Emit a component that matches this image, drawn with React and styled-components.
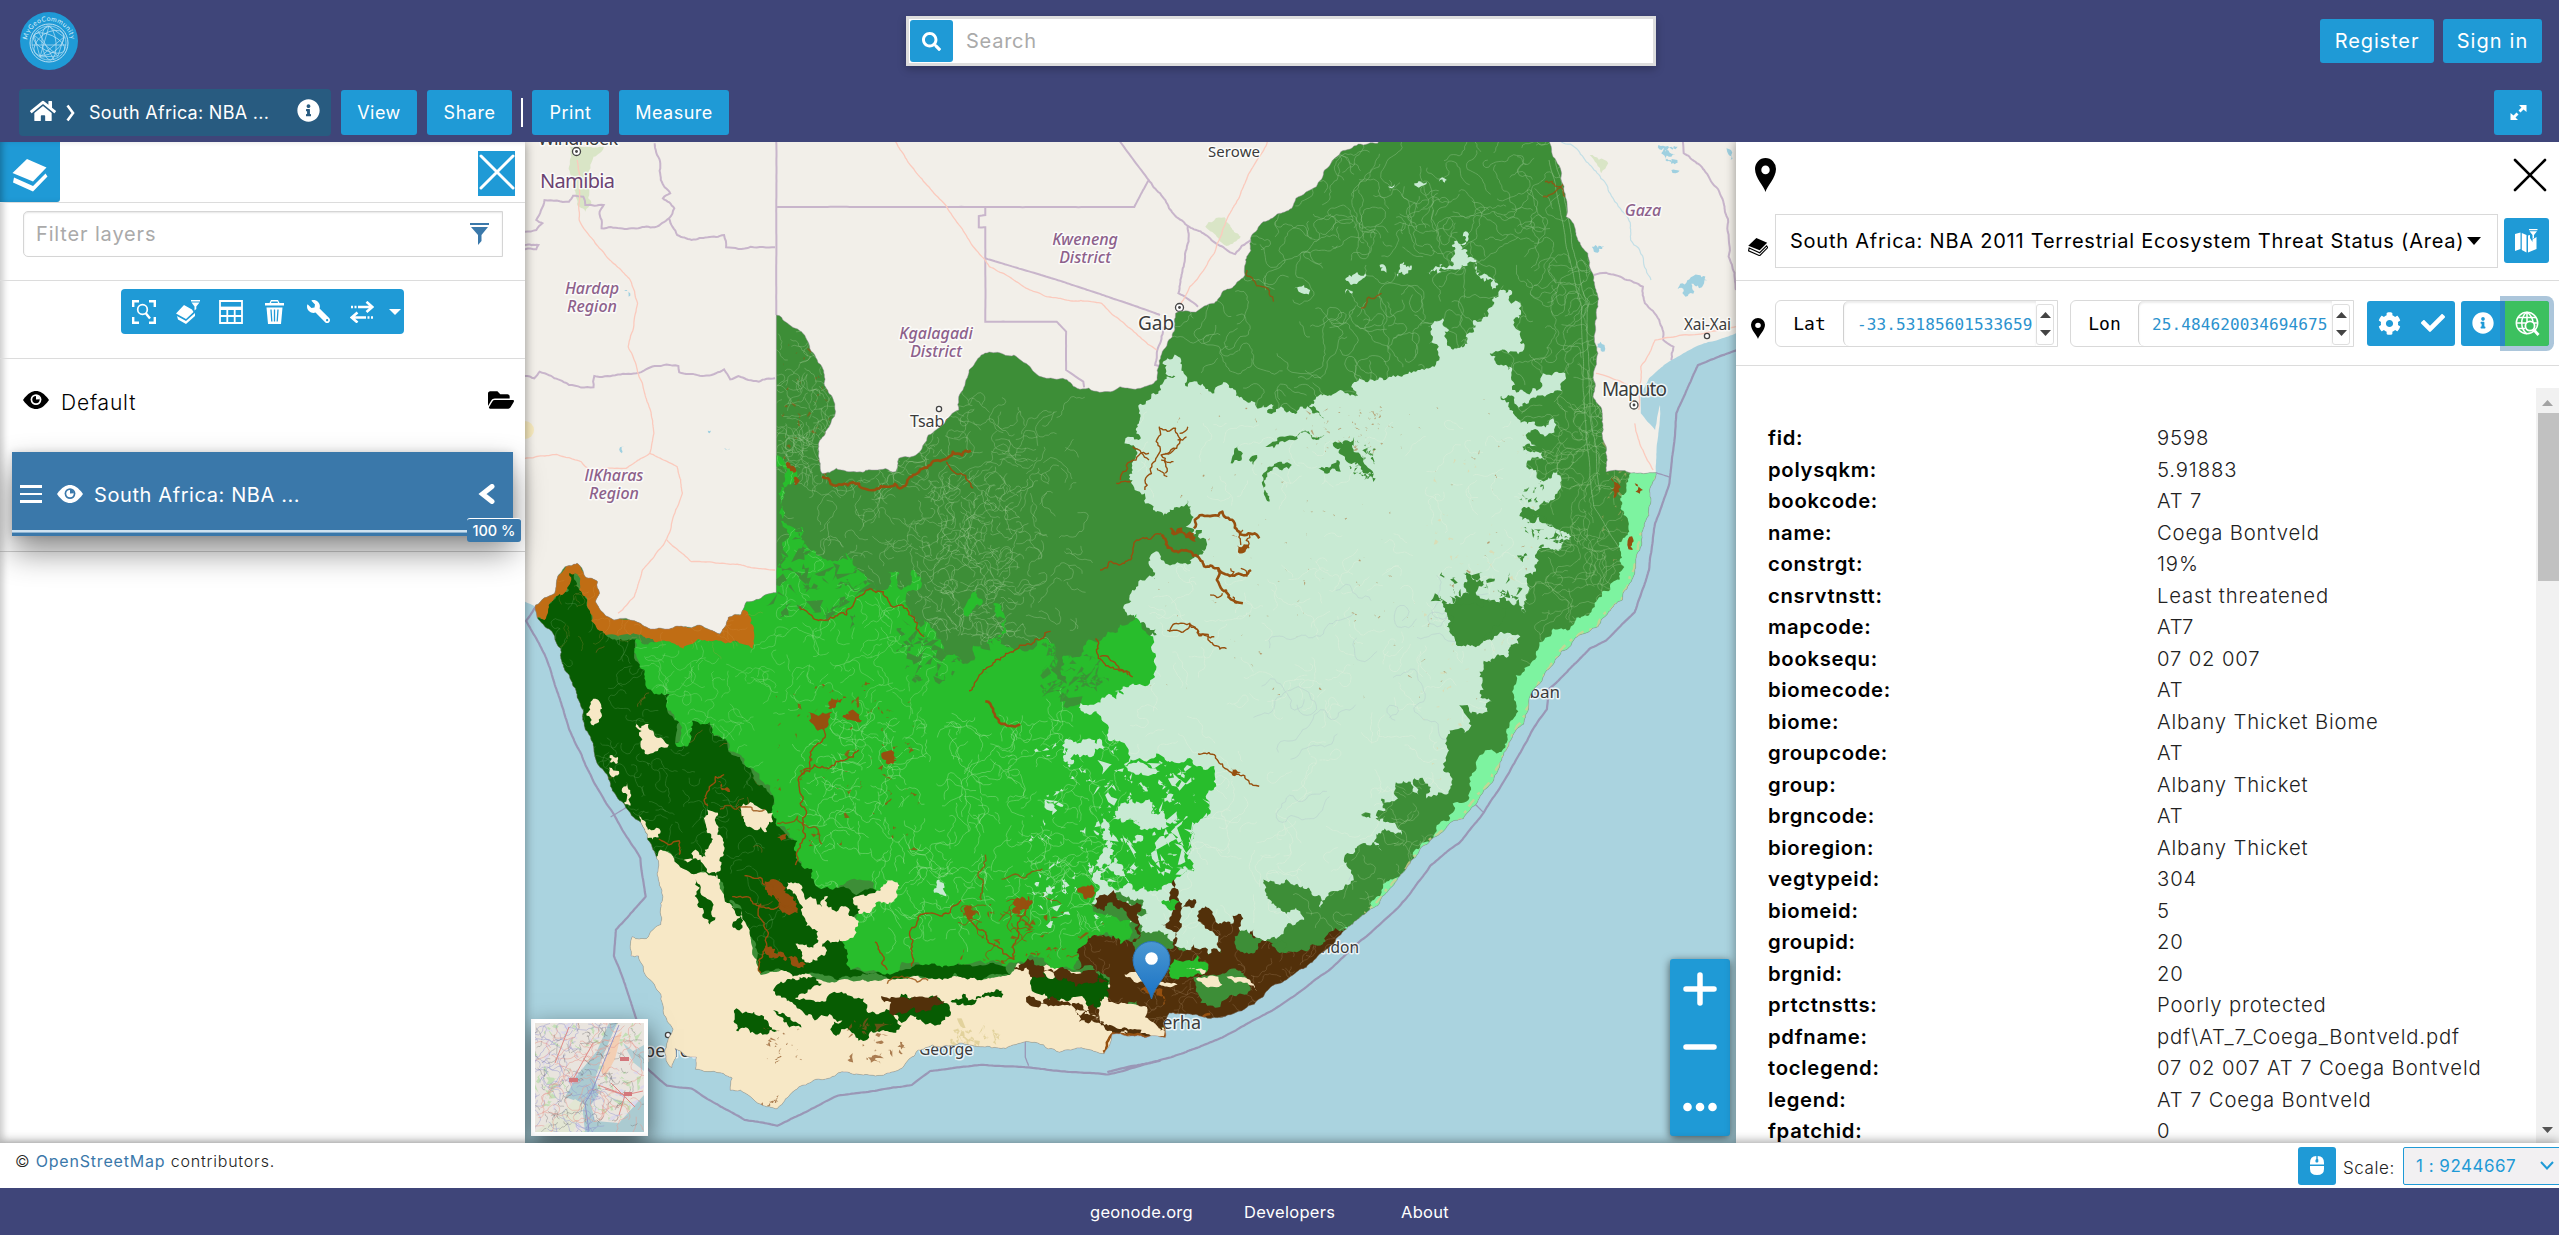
import React from "react";
import styled, { createGlobalStyle, css } from "styled-components";
import { FaSearch, FaHome, FaInfoCircle, FaWrench, FaCog, FaCheck, FaFolderOpen } from "react-icons/fa";

/* ---------- theme ---------- */
const navy = "#3f4579";
const blue = "#1f9ad6";
const steel = "#3a78aa";
const line = "#dcdcdc";

const GlobalStyle = createGlobalStyle`
  * { box-sizing: border-box; }
  body { margin: 0; overflow: hidden; background: #fff; }
  body, button, input { font-family: Inter, "Open Sans", sans-serif; }
  svg { display: block; flex: none; }
`;

/* ---------- map geometry ---------- */
const FRAMES = {
  A: [520, 140, 2.45, 3],
  B: [1100, 140, 2.45, 3],
  C: [520, 600, 2.45, 2.866],
  D: [1100, 600, 2.45, 2.469],
};
const pts = (s) => {
  let f = FRAMES.A;
  return s.trim().split(/\s+/).map((t) => {
    if (FRAMES[t[0]]) { f = FRAMES[t[0]]; t = t.slice(1); }
    const [x, y] = t.split(",").map(Number);
    return [f[0] + x / f[2], f[1] + y / f[3]];
  });
};
const rng = (seed) => () => {
  seed = (seed + 0x6d2b79f5) | 0;
  let t = Math.imul(seed ^ (seed >>> 15), 1 | seed);
  t = (t + Math.imul(t ^ (t >>> 7), 61 | t)) ^ t;
  return ((t ^ (t >>> 14)) >>> 0) / 4294967296;
};
const split = (a, b, amp, r, out) => {
  const dx = b[0] - a[0], dy = b[1] - a[1];
  const len = Math.hypot(dx, dy);
  if (len < 3.2) { out.push(b); return; }
  const k = ((r() - 0.5) * 2 * amp * Math.min(len, 34)) / len;
  const m = [(a[0] + b[0]) / 2 - dy * k, (a[1] + b[1]) / 2 + dx * k];
  split(a, m, amp, r, out);
  split(m, b, amp, r, out);
};
const rough = (s, amp = 0.25, closed = true, seed = 7, straightClose = false) => {
  const p = pts(s), r = rng(seed), out = [p[0]];
  for (let i = 1; i < p.length; i++) split(p[i - 1], p[i], amp, r, out);
  if (closed && !straightClose) split(p[p.length - 1], p[0], amp, r, out);
  return "M" + out.map((q) => q[0].toFixed(1) + " " + q[1].toFixed(1)).join("L") + (closed ? "Z" : "");
};

const COUNTRY = rough(`A628,525 650,545 690,575 710,625 740,680 745,730 765,770 770,830 735,900 732,940 740,1000 775,985 810,995 870,990 920,995 928,955 970,945 1000,885 1040,850 1075,810 1085,750 1100,690 1130,645 1170,637 1210,645 1250,680 1290,715 1330,715 1365,745 1420,757 1470,740 1520,745
 B140,720 165,610 185,520 280,490 300,455 355,405 357,370 370,290 400,245 470,205 480,175 530,140 550,90 590,35 680,10 690,-10 1098,-10 1110,50 1140,170 1142,230 1165,270 1195,340 1210,410 1220,500 1220,640 1208,770 1230,810 1240,995 1362,998 1350,1080 1330,1170 1310,1290 1280,1380 1220,1460
 D1170,90 1100,170 1050,265 1010,340 985,390 940,470 890,540 830,580 760,650 700,725 650,775 600,815 560,860 520,895 460,935 400,980 300,1030 170,1020 155,1045 160,1080 110,1080 30,1072 10,1120
 C1350,1290 1240,1265 1190,1285 1100,1275 1010,1275 950,1320 930,1345 850,1360 780,1355 760,1370 700,1390 650,1430 630,1458 590,1445 540,1405 515,1405 520,1370 490,1355 430,1345 432,1310 380,1285 372,1340 358,1320 360,1270 375,1230 345,1130 310,1080 290,1020 272,1020 275,965 310,970 345,930 350,850 340,760 325,715 270,610 220,520 180,420 140,280 100,140 60,75 38,30
 A38,1395 85,1360 90,1320 110,1280 140,1270 160,1310 190,1325 195,1360 185,1385 205,1420 230,1440 260,1435 300,1455 320,1467 400,1460 440,1455 490,1482 505,1455 510,1432 540,1425 555,1385 600,1365 628,1358`, 0.12, true, 7, true);

const LAND = rough(`A-60,-60 B1700,-60 1700,555 1558,580 1480,610 1400,660 1345,715 1325,760 1325,820 1360,870 1372,795 1366,900 1362,998 A400,1500 100,1460 38,1400 12,1385 -60,1370`, 0.03);

const GRASS = rough(`B165,655 205,700 215,740 280,760 320,745 430,790 410,818 490,800 540,755 600,760 625,775 635,715 700,720 740,710 820,680 830,620 805,610 840,535 850,610 900,600 915,540 950,530 965,470 1000,465 1030,490 1030,590 1040,620 1000,640 960,640 1010,690 1010,750 1080,745 1140,700 1090,770 1050,790 1000,765 975,770 1000,800 1110,835 1100,880 1060,870 1070,920 1035,920 1090,960 1045,970 1080,1020 1125,990 1130,1040 1110,1080 1040,1090 1035,1140 1110,1160 1150,1200 1110,1230 1070,1240 1040,1310 1040,1420 990,1370 960,1400 890,1300 905,1360 840,1400 850,1460
 D870,100 930,105 1030,90 1000,140 940,150 930,230 960,250 880,260 910,310 870,320 850,360 840,420 850,480 800,490 770,440 780,480 725,450 730,490 690,490 700,520 640,530 710,550 740,580 670,600 690,620 600,630 620,680 560,730 540,760 510,710 400,690 420,750 480,760 500,790 440,830 370,830 330,860 200,860 150,820 100,820 90,760 40,740
 C1540,900 1440,850 1400,870 1400,700 1300,600 1290,420 1340,300 1520,220 1560,100 A1520,1450 1500,1350 1560,1320 1550,1240
 B150,1260 240,1250 250,1170 210,1160 215,1080 180,1110 130,1110 110,1060 85,1050 80,990 60,910 95,900 95,820 120,780 150,750`, 0.38);

const KAROO = rough(`A620,950 650,970 680,1010 640,1040 640,1080 635,1120 690,1160 690,1200 720,1230 760,1260 800,1240 850,1320 870,1350 895,1350 900,1295 930,1300 935,1350 960,1290 985,1330 950,1400
 C960,50 1040,150 1100,180 1110,130 1170,100 1200,135 1290,110 1300,200 1340,240 1330,160 1400,115 1480,115 1470,70 1510,40 D85,40 130,90 135,190 90,210 40,245 0,230
 C1480,270 1400,300 1370,290 1380,320 1430,350 1440,400 1490,440 1480,470 1568,490 D60,410 220,390 280,410 285,460 260,490 265,530 225,570 215,640 230,670 180,700 140,720 80,700 40,650 0,690
 C1560,830 1500,830 1440,760 1400,800 1420,820 1400,870 1500,920 1500,950 1420,960 1370,1010 1360,1060 1290,1040 1210,1040 1190,1050 1090,1045 980,1045 900,1070 810,1060 790,980 825,900 880,850 930,815 870,830 780,825 725,820 715,770 680,745 680,690 635,650 620,560 560,480 510,430 505,400 475,390 465,350 420,345 410,420 380,410 390,350 360,310 370,260 310,250 305,200 280,150 285,110 400,110 500,110 570,140 530,70 540,20 A560,1340 620,1340`, 0.28);

const SUCCULENT = rough(`A60,1440 70,1395 120,1350 118,1295 135,1295 145,1350 C165,0 175,60 210,100 285,110 280,150 305,200 310,250 370,260 360,310 390,350 380,410 410,420 420,345 465,350 475,390 505,400 510,430 560,480 620,560 635,650 680,690 680,745 715,770 725,820 780,825 870,830 900,810 880,850 825,900 790,980 810,1060 900,1070 980,1045 1090,1045 1190,1050 1200,1075 1130,1090 1000,1085 900,1085 780,1090 700,1070 640,1060 590,1070 580,1030 560,940 500,850 490,800 455,780 410,775 375,735 345,715 325,760 200,600 0,400 0,0`, 0.2);

const FYNBOS = rough(`C300,700 345,715 375,735 410,775 455,780 490,800 500,850 560,940 580,1030 590,1075 640,1060 700,1070 780,1090 900,1085 1000,1085 1130,1090 1200,1075 1220,1040 1290,1045 1340,1060 1400,1080 1540,1100 D60,995 115,1005 110,1030 150,1055 200,1090 0,1200 C600,1560 200,1400 200,900`, 0.15);

const THICKET = rough(`C1370,1020 1380,990 1430,960 1500,980 1515,930 1490,910 1400,880 1410,855 1490,870 1520,930 D100,870 150,890 180,860 185,820 150,800 175,780 180,690 200,760 235,740 200,780 185,830 200,865 230,850 310,870 290,830 250,800 250,760 290,800 320,800 345,775 345,820 440,870 520,850 600,810 640,880 300,1060 170,1020 170,1090 120,1060 60,1030 115,1010 90,990 0,980
 C1568,1270 1520,1240 1400,1200 1360,1180 1530,1165 1440,1145 1445,1090 1360,1060`, 0.34);

const DESERT = rough(`A30,1430 20,1390 85,1350 90,1310 110,1270 140,1260 165,1300 200,1315 205,1370 205,1410 300,1440 320,1457 440,1445 490,1470 510,1425 545,1410 C570,140 480,115 400,140 330,120 270,100 210,100 175,60 165,0 A145,1350 135,1300 120,1300 115,1350 70,1395 60,1440`, 0.2);

const COAST = rough(`B1300,1000 1380,990 1400,1300 1200,1520 D1000,520 850,640 600,840 600,808 690,722 785,605 855,545 905,488 922,410 995,325 1015,240 1060,150 1110,70 B1150,1470 1200,1420 1250,1350 1280,1200 1290,1050`, 0.28);

const patches = (list, amp = 0.35) => list.map((s, i) => rough(s, amp, true, 11 + i)).join("");

const GREEN_ISLES = patches([
  "B405,920 440,890 490,880 550,885 530,900 440,905",
  "B470,975 430,980 410,1010 415,1085 400,1040 410,990 440,965",
  "B570,910 620,910 640,950 670,1000 640,980 600,950",
  "B320,970 340,915 335,960", "B365,960 385,945 375,975", "B535,985 565,980 580,960 590,995 550,1000",
  "B500,780 530,810 550,835 520,820", "B955,640 1010,650 1000,690 970,670",
  "D1000,20 880,100 850,30 840,0 960,0", "B1040,1100 1090,1130 1110,1160 1060,1150",
]);
const MINT_ISLES = patches([
  "B475,445 500,435 515,450 500,462", "B600,455 620,455 600,465", "B610,405 625,420 650,400 640,420 615,435",
  "B730,410 745,365 755,400 740,395", "B685,375 700,380 702,398", "B800,400 850,385 865,350 862,315 878,310 900,275 885,330 920,370 970,445 930,410 900,370 850,388",
  "B980,450 1010,455 1000,480 960,500", "B770,130 800,125 795,135", "B830,125 850,120 845,128", "B705,140 722,132 715,145",
  "C1335,400 1370,410 1400,400 1430,430 1400,450 1370,450 1345,480 1330,450",
  "C1470,590 1500,570 1520,590 1550,580 1560,640 1520,650 1490,630 1460,625", "C1425,640 1445,650 1430,690",
  "C1430,710 1460,700 1440,760 1400,790 1410,760", "C1290,570 1310,590 1290,600", "C1270,850 1310,820 1290,860", "C1020,810 1045,850 1025,840",
  "D150,490 180,480 170,500", "D120,550 170,540 150,560", "D60,590 100,580 80,600",
  "D170,830 195,820 200,850 300,850 310,865 240,860",
], 0.5);
const CREAM_ISLES = patches([
  "C458,600 485,610 497,690 492,770 485,800 470,780 400,745 430,715 455,735",
  "C540,595 580,590 600,600 620,635 605,665 590,650 570,655",
  "C285,355 300,375 315,355 330,390 365,415 340,425 320,440 300,400",
  "C285,610 310,650 340,680 310,680", "C190,285 197,320 180,360 172,350", "C220,445 240,450 235,470 220,465", "C218,480 242,490 240,502 220,500",
  "C262,520 270,590 255,580 250,540",
  "C655,810 700,860 740,880 755,850 770,890 820,910 820,960 770,980 740,985 730,950 700,920 685,870",
  "C675,985 740,980 745,1020 710,1040", "C815,855 870,840 890,815 925,810 925,845 870,870 830,900",
  "C1420,1165 1568,1160 1540,1190",
  "D200,905 250,920 200,915", "D300,930 370,945 380,965 320,945",
]);
const DARK_ISLES = patches([
  "C670,1140 750,1150 830,1140 850,1180 920,1200 935,1220 900,1235 760,1230 790,1205 700,1190",
  "C910,1160 1030,1145 1055,1190 1010,1215 970,1200 975,1185 915,1185",
  "C1250,1070 1330,1080 1440,1105 1440,1140 1350,1145 1260,1125",
  "C530,1170 545,1185 580,1190 610,1220 630,1235 590,1240 530,1235", "C620,1120 650,1095 680,1090 740,1100 650,1140",
  "C1055,1150 1180,1120 1180,1140 1070,1160", "C620,1175 650,1190 690,1225 660,1225",
  "C430,800 450,850 465,930 450,890", "C500,850 520,870 545,940 520,930", "D0,920 25,940 20,975 0,970",
]);
const GREEN_SOUTH = patches(["D230,930 310,920 370,940 310,985 240,970", "D330,830 400,840 380,870 340,865", "D420,850 450,845 450,870"]);
const KAROO_ISLES = patches(["D0,780 60,790 80,820 50,850 0,830", "D165,910 260,895 265,905 210,930", "D150,745 195,745 185,765", "A1090,1400 1120,1350 1115,1400 1095,1430", "A1160,1390 1180,1400 1170,1500"]);
const THICKET_SOUTH = patches(["C885,1135 1000,1140 1040,1150 940,1185 905,1185", "C1210,1055 1350,1070 1440,1095 1340,1085 1260,1080", "C1240,1145 1330,1160 1440,1200 1360,1180", "C1390,1190 1450,1215 1490,1245 1450,1235"]);
const CREAM_SOUTH = patches(["D0,990 60,995 115,1005 110,1030 150,1060 140,1075 60,1055 0,1040", "D60,925 130,935 190,950 120,945", "D235,935 290,930 300,950 260,955", "D210,910 260,915 250,925", "D310,930 370,945 385,965 330,945"], 0.2);
const RUST_BLOBS = patches([
  "C705,320 735,330 765,320 755,350 725,370 708,345", "C755,310 800,280 770,310", "C790,335 820,318 838,345 815,345", "C885,440 910,430 915,470",
  "C620,800 650,840 680,885 665,900 640,870 600,830", "C600,990 650,1020 700,1045 650,1035", "C480,515 515,550 495,545", "C630,680 655,670 640,690",
  "C1090,880 1115,890 1110,915 1090,900", "C1230,850 1255,860 1225,900 1205,890", "C1365,830 1400,815 1410,840 1380,850", "A655,965 675,985 670,1005", "A670,1015 685,1020 672,1035",
  "B170,1165 230,1180 235,1205 210,1195", "B335,1215 365,1215 350,1240", "B1310,1030 1330,1050 1312,1055", "B1297,1190 1305,1230 1292,1215",
  "D320,415 345,425 330,435", "D100,965 160,985 155,1000", "B1255,1010 1268,1030 1258,1075 1252,1050",
], 0.4);
const RIVERS = [
  "A740,1010 840,1045 900,1040 960,1010 1035,960 1060,935 1105,932", "A1045,965 1080,1000 1110,1045", "A685,1400 740,1440 800,1425 830,1370 890,1355 920,1400 990,1490",
  "B150,1185 200,1230 240,1250 290,1285 370,1290", "B290,1285 300,1350 350,1390", "B230,1165 250,1125 300,1115 330,1150 390,1195",
  "B0,1290 60,1270 90,1200 150,1180", "B145,860 140,950 110,1050", "B145,865 185,865 195,910 150,945 160,1000", "B40,1030 75,1025", "B50,1020 75,965 120,940",
  "B170,1475 220,1450 280,1490", "C740,360 710,450 690,560 680,720 675,760", "C690,500 760,480 830,430", "C550,790 620,820 680,895", "C590,870 600,1000 590,1070",
  "C520,850 590,880 680,885", "C1090,880 1120,940 1210,1030 1225,920 1245,850", "C960,1050 955,950 1080,860", "C870,980 900,1060", "C1140,290 1170,340 1225,355", "C1100,260 1135,200 1200,150 1300,90",
  "C1410,110 1430,180 1490,215", "D0,140 40,160 80,190", "D165,75 220,60 265,85 310,120", "D240,380 300,405 340,430 390,460", "C460,590 470,530 500,500", "C340,685 390,690 390,730", "C490,600 600,600",
  "C630,640 680,620 740,700", "C1140,730 1130,860", "C1180,800 1280,770", "C900,1100 1000,1090", "B360,390 400,440 425,485", "B640,505 690,460", "B1090,125 1140,170", "B1150,130 1085,170",
].map((s, i) => rough(s, 0.25, false, 40 + i));
const TWIGS = ["B195,880 215,860", "B190,900 212,890", "B160,940 185,925", "B150,960 180,965", "B140,985 165,1010", "B80,920 120,960", "B320,1285 325,1310", "B345,1285 360,1310", "B350,1170 345,1215", "B370,1180 365,1225", "B300,1360 270,1365", "B325,1370 335,1390"].map((s, i) => rough(s, 0.3, false, 80 + i)).join("");

const walks = (seed, n, [x0, y0, x1, y1], steps, step) => {
  const r = rng(seed);
  let d = "";
  for (let i = 0; i < n; i++) {
    let x = x0 + r() * (x1 - x0), y = y0 + r() * (y1 - y0), a = r() * 6.28;
    d += `M${x.toFixed(1)} ${y.toFixed(1)}`;
    const k = 4 + Math.floor(r() * steps);
    for (let j = 0; j < k; j++) {
      a += (r() - 0.5) * 1.9;
      x += Math.cos(a) * step; y += Math.sin(a) * step;
      d += `L${x.toFixed(1)} ${y.toFixed(1)}`;
    }
  }
  return d;
};
const specks = (seed, n, box, size) => {
  const r = rng(seed);
  let d = "";
  for (let i = 0; i < n; i++) {
    const x = box[0] + r() * (box[2] - box[0]), y = box[1] + r() * (box[3] - box[1]);
    d += `M${x.toFixed(1)} ${y.toFixed(1)}`;
    const s = size * (0.4 + r());
    for (let j = 0; j < 6; j++) d += `l${((r() - 0.45) * s).toFixed(1)} ${((r() - 0.5) * s).toFixed(1)}`;
    d += "Z";
  }
  return d;
};

const BORDERS = [
  "A628,0 628,525", "A12,275 40,270 55,250 40,240 60,180 120,185 130,167 155,170 160,195 205,195 195,215 200,265 290,265 330,262 365,235 378,205 350,175 368,160 345,120 330,10",
  "A365,235 385,285 420,300 500,285 505,322 625,322", "A12,315 45,315 40,328 12,328", "A12,708 35,715 48,695 120,735 180,742 182,708 285,700 330,678 388,678 390,697 480,700 500,688 515,718 535,708 585,725 625,715",
  "A630,201 1505,201 1540,120 1470,5", "A1540,120 1590,205 1636,258 1752,342 1790,300", "A1140,201 1140,225 1124,228 1124,262 1140,262 1140,545 1315,545 1338,575 1338,690 1380,725 1382,742",
  "A1140,355 1330,425 1500,495 1568,525", "B215,258 205,380 192,460 240,500", "B155,560 135,675 150,680", "B1428,5 1430,40 1480,90 1530,200 1540,350 1558,450", "B1210,405 1240,398 1330,440 1335,490 1370,540 1380,600 1405,620 1400,660",
].map((s, i) => rough(s, [0, 5, 7, 8].includes(i) ? 0.005 : 0.08, false, 3 + i));
const ROADS = [
  "A140,60 145,240 220,360 270,420 288,490 265,620 300,730 328,880 318,940 385,980 398,1060 360,1195 300,1290 280,1370 240,1420", "A12,955 90,943 150,965 170,990 260,985 318,940", "A360,1200 420,1265 500,1270 625,1290",
  "A920,5 960,80 1090,280 1150,380 1290,470 1425,490 1480,550 1560,630", "B410,5 365,100 310,240 280,340 220,440 195,500", "B1320,810 1325,680 1360,600 1480,580 1558,560", "B1215,700 1300,740", "B1310,850 1330,930 1355,990",
].map((s, i) => rough(s, 0.05, false, 23 + i));
const MARITIME = rough(`A40,1400 C35,25 15,60 60,155 120,370 180,520 295,740 308,850 235,945 230,1020 265,1130 290,1220 310,1340 360,1392 420,1400 550,1490 630,1507 780,1420 960,1390 1005,1350 1130,1332 1440,1360 1568,1320 D20,1165 170,1130 300,1080 420,1015 560,915 640,840 730,760 810,655 880,600 940,525 1000,430 1060,320 1095,270 1100,220 1200,120 1240,100 1310,30 B1320,1380 1345,1290 1360,1150 1395,1030 1412,820 1465,675 1570,625`, 0.02, false);
const LAKES = patches(["B1368,15 1415,20 1410,28 1370,28", "B1375,40 1410,42 1400,50", "B1385,60 1415,68 1400,72", "B1400,90 1420,92 1410,100", "B1415,448 1480,430 1440,468", "B1205,320 1235,318 1210,335", "B1226,605 1236,615 1230,635", "A255,450 270,460 266,470", "A245,935 256,920 250,940", "A500,925 515,925 508,930", "B1535,25 1546,30 1545,60", "A460,872 468,872 465,880"], 0.5);

const Place = styled.text`
  font-family: "Noto Sans", sans-serif;
  font-size: ${(p) => p.$size || 17}px;
  fill: ${(p) => (p.$region ? "#8d618b" : p.$country ? "#6b4372" : "#3b3b3b")};
  font-style: ${(p) => (p.$region ? "italic" : "normal")};
  font-weight: ${(p) => (p.$region ? 500 : 400)};
  paint-order: stroke;
  stroke: rgba(255, 255, 255, 0.75);
  stroke-width: 3px;
  stroke-linejoin: round;
`;
const Town = ({ x, y, capital }) => (
  <g fill="none" stroke="#444" strokeWidth="1.3">
    <circle cx={x} cy={y} r={capital ? 4 : 2.6} fill="#fff" />
    {capital && <circle cx={x} cy={y} r="1.4" fill="#444" stroke="none" />}
  </g>
);

const BioMap = () => (
  <svg width="1211" height="1001" viewBox="525 142 1211 1001">
    <defs>
      <clipPath id="country"><path d={COUNTRY} /></clipPath>
      <clipPath id="grass"><path d={GRASS} /></clipPath>
      <clipPath id="karoo"><path d={KAROO} /></clipPath>
      <clipPath id="succulent"><path d={SUCCULENT} /></clipPath>
      <clipPath id="thicket"><path d={THICKET} /></clipPath>
      <linearGradient id="pin" x1="0" y1="0" x2="0" y2="1"><stop offset="0" stopColor="#4a97d2" /><stop offset="1" stopColor="#1a72c4" /></linearGradient>
    </defs>
    <rect x="525" y="142" width="1211" height="1001" fill="#aad3df" />
    <path d={LAND} fill="#f2efe9" />
    <path d={patches(["A122,20 205,20 180,50 170,120 175,190 160,215 140,180 120,80", "B258,260 305,232 345,290 310,318 290,295", "B1200,45 1245,70 1228,100"], 0.2)} fill="#d5e3c0" opacity="0.85" />
    <ellipse cx="525" cy="430" rx="9" ry="9" fill="#f6e9bd" />
    <path d={LAKES} fill="#9fd0e0" />
    <path d={rough("B1130,5 1200,75 1250,160 1285,220 1300,300 1350,420", 0.12, false)} fill="none" stroke="#c3dfe6" strokeWidth="1.2" />
    <g fill="none" stroke="#c8b5cb" strokeWidth="2">{BORDERS.map((d, i) => <path key={i} d={d} />)}</g>
    <g fill="none" stroke="#fbcabd" strokeWidth="1.3">{ROADS.map((d, i) => <path key={i} d={d} />)}</g>
    <path d={MARITIME} fill="none" stroke="#9a97b6" strokeWidth="2.2" strokeLinejoin="round" />
    <path d={rough("D915,500 940,525", 0, false) + rough("C222,622 260,595", 0, false) + rough("C1238,1260 1238,1310 1246,1335", 0, false) + rough("B1362,998 1398,1012", 0, false)} fill="none" stroke="#9a97b6" strokeWidth="1.3" />
    <Town x={576.5} y={151.5} capital /><Town x={939} y={409} /><Town x={1179.5} y={307.5} capital /><Town x={1707} y={336} /><Town x={1634} y={405} capital /><Town x={668} y={1035} />
    <Place x="538" y="144.5" $size={18} textLength="80">Windhoek</Place>
    <Place x="540" y="188" $size={20} $country textLength="75">Namibia</Place>
    <Place x="592" y="294" $size={16} $region textAnchor="middle">Hardap</Place>
    <Place x="592" y="312" $size={16} $region textAnchor="middle">Region</Place>
    <Place x="614" y="481" $size={16} $region textAnchor="middle">llKharas</Place>
    <Place x="614" y="499" $size={16} $region textAnchor="middle">Region</Place>
    <Place x="936" y="339" $size={16} $region textAnchor="middle">Kgalagadi</Place>
    <Place x="936" y="357" $size={16} $region textAnchor="middle">District</Place>
    <Place x="1085" y="245" $size={16} $region textAnchor="middle">Kweneng</Place>
    <Place x="1085" y="263" $size={16} $region textAnchor="middle">District</Place>
    <Place x="1643" y="216" $size={16} $region textAnchor="middle">Gaza</Place>
    <Place x="910" y="427" $size={16}>Tsabong</Place>
    <Place x="1208" y="156.5" $size={15} textLength="52">Serowe</Place>
    <Place x="1138" y="330" $size={19}>Gaborone</Place>
    <Place x="1602" y="396" $size={19} textLength="65">Maputo</Place>
    <Place x="1684" y="330" $size={15.5} textLength="47">Xai-Xai</Place>
    <Place x="1560" y="698" $size={17} textAnchor="end">Durban</Place>
    <Place x="1359" y="953" $size={15.5} textAnchor="end">East London</Place>
    <Place x="1201" y="1029" $size={18} textAnchor="end">Gqeberha</Place>
    <Place x="919" y="1055" $size={15.5}>George</Place>
    <Place x="622" y="1057" $size={18} textLength="94">Cape Town</Place>

    <g clipPath="url(#country)">
      <rect x="520" y="130" width="1220" height="1020" fill="#3d8e37" />
      <path d={walks(1, 260, [780, 400, 1080, 640], 16, 3)} fill="none" stroke="#a9cf9c" strokeWidth="0.8" opacity="0.42" />
      <path d={walks(31, 150, [920, 480, 1020, 640], 10, 2.5)} fill="none" stroke="#a9cf9c" strokeWidth="0.8" opacity="0.45" />
      <path d={walks(21, 70, [776, 330, 840, 480], 12, 3)} fill="none" stroke="#a9cf9c" strokeWidth="0.8" opacity="0.4" />
      <path d={walks(2, 230, [1180, 145, 1640, 430], 34, 3)} fill="none" stroke="#8fc187" strokeWidth="0.9" opacity="0.5" />
      <path d={walks(3, 150, [1540, 380, 1640, 740], 24, 3)} fill="none" stroke="#9cc98f" strokeWidth="0.8" opacity="0.45" />
      <path d={walks(13, 120, [1300, 740, 1500, 940], 14, 3)} fill="none" stroke="#9cc98f" strokeWidth="0.8" opacity="0.45" />
      <path d={specks(4, 50, [780, 340, 840, 480], 4)} fill="#96500f" opacity="0.6" />
      <path d={specks(14, 40, [1600, 440, 1640, 560], 5)} fill="#c8b070" opacity="0.5" />
      <path d={rough("B1100,60 1140,300 1180,500 1190,850 1210,1100 1270,1220", 0.03, false) + rough("B1115,60 1155,300 1195,500 1200,800 1225,1050", 0.04, false)} fill="none" stroke="#8fc187" strokeWidth="1" opacity="0.6" />
      <path d={FYNBOS} fill="#f7e8c6" />
      <path d={GRASS} fill="#c8ead3" />
      <g clipPath="url(#grass)">
        <path d={walks(5, 300, [1130, 400, 1560, 950], 14, 3)} fill="none" stroke="#dceedb" strokeWidth="0.8" opacity="0.7" />
        <path d={walks(6, 14, [1250, 600, 1480, 850], 40, 4)} fill="none" stroke="#b9cfcf" strokeWidth="0.9" opacity="0.6" />
        <path d={specks(7, 150, [1140, 390, 1530, 700], 2.5)} fill="#a8662c" opacity="0.6" />
        <path d={specks(8, 120, [1420, 450, 1540, 860], 3.5)} fill="#e4d6a8" opacity="0.65" />
        <path d={specks(9, 50, [1300, 410, 1380, 450], 3)} fill="#a8662c" opacity="0.55" />
        <path d={specks(33, 60, [1520, 480, 1570, 560], 7) + specks(34, 30, [1440, 570, 1520, 610], 8) + specks(35, 22, [1350, 440, 1375, 475], 7)} fill="#3d8e37" />
      </g>
      <path d={SUCCULENT} fill="#075c02" />
      <g clipPath="url(#succulent)">
        <path d={walks(10, 240, [550, 600, 780, 1050], 16, 2.8)} fill="none" stroke="#5f9a58" strokeWidth="0.7" opacity="0.5" />
        <path d={walks(36, 40, [560, 640, 760, 1040], 6, 2.8)} fill="none" stroke="#a8662c" strokeWidth="0.8" opacity="0.6" />
      </g>
      <path d={KAROO} fill="#28bd2c" />
      <g clipPath="url(#karoo)">
        <path d={walks(11, 330, [800, 720, 1130, 930], 14, 2.8)} fill="none" stroke="#a6e5a0" strokeWidth="0.8" opacity="0.5" />
        <path d={walks(12, 150, [776, 480, 960, 740], 14, 3)} fill="none" stroke="#a6e5a0" strokeWidth="0.8" opacity="0.4" />
        <path d={walks(15, 70, [640, 640, 760, 780], 14, 3)} fill="none" stroke="#a6e5a0" strokeWidth="0.8" opacity="0.35" />
        <path d={specks(16, 130, [1030, 740, 1200, 930], 7)} fill="#c8ead3" />
        <path d={specks(26, 45, [1100, 760, 1210, 880], 13)} fill="#c8ead3" />
        <path d={specks(17, 80, [770, 680, 920, 850], 5)} fill="#96500f" opacity="0.8" />
        <path d={specks(18, 60, [960, 900, 1130, 990], 6)} fill="#96500f" opacity="0.85" />
        <path d={walks(37, 26, [960, 900, 1130, 1000], 9, 2.8)} fill="none" stroke="#96500f" strokeWidth="1" opacity="0.8" />
        <path d={specks(19, 50, [776, 520, 860, 620], 13)} fill="#3d8e37" />
        <path d={specks(20, 60, [900, 600, 1000, 680], 12)} fill="#3d8e37" />
        <path d={specks(27, 50, [1040, 640, 1100, 700], 12)} fill="#3d8e37" opacity="0.9" />
      </g>
      <path d={GREEN_ISLES} fill="#3d8e37" />
      <path d={MINT_ISLES} fill="#c8ead3" />
      <path d={CREAM_ISLES} fill="#f7e8c6" />
      <path d={DARK_ISLES} fill="#075c02" />
      <path d={DESERT} fill="#c06d14" />
      <path d={walks(22, 60, [550, 570, 750, 650], 8, 2.4)} fill="none" stroke="#d99a54" strokeWidth="0.6" opacity="0.35" />
      <path d={COAST} fill="#7df3a0" />
      <path d={rough("B1362,1010 1330,1170 1308,1290 1278,1380 1220,1458 D1168,90 1098,170 1048,265 1008,340 983,390 938,470 888,538 828,578 758,648 698,723 648,773", 0.1, false)} fill="none" stroke="#d9cd92" strokeWidth="2.4" opacity="0.75" strokeDasharray="9 5 3 6" />
      <path d={THICKET + THICKET_SOUTH} fill="#52300a" />
      <g clipPath="url(#thicket)">
        <path d={walks(23, 120, [1080, 930, 1330, 1030], 12, 2.4)} fill="none" stroke="#9a7c58" strokeWidth="0.7" opacity="0.5" />
      </g>
      <path d={GREEN_SOUTH} fill="#3d8e37" />
      <path d={KAROO_ISLES} fill="#28bd2c" />
      <path d={CREAM_SOUTH} fill="#f7e8c6" />
      <path d={rough("D270,1022 180,1022 160,1040 158,1080 110,1080 32,1070 12,1120 C1430,1290", 0.12, false)} fill="none" stroke="#96500f" strokeWidth="2.5" />
      <path d={specks(24, 26, [850, 1020, 910, 1060], 7) + specks(25, 20, [750, 1100, 780, 1130], 4) + specks(28, 24, [765, 1025, 800, 1060], 4)} fill="#8a5020" opacity="0.7" />
      <path d={specks(29, 30, [950, 1028, 1000, 1050], 8)} fill="#d9c98a" opacity="0.7" />
      <path d={RUST_BLOBS} fill="#96500f" />
      <g fill="none" stroke="#96500f" strokeLinejoin="round">
        {RIVERS.map((d, i) => <path key={i} d={d} strokeWidth={[0, 3, 4, 5, 20].includes(i) ? 2.6 : 1.4} opacity={i > 27 ? 0.8 : 1} />)}
        <path d={TWIGS} strokeWidth="1.3" />
      </g>
    </g>
    <path d={COUNTRY} fill="none" stroke="#9b8aa0" strokeWidth="1" opacity="0.45" />
    <path d="M1151.5 999 C1148 984 1133 974 1133 960 A18.5 18.5 0 1 1 1170 960 C1170 974 1155 984 1151.5 999Z" fill="url(#pin)" stroke="#2b74b5" strokeWidth="1" />
    <circle cx="1151.5" cy="958.5" r="6.3" fill="#fff" />
  </svg>
);

const CityThumb = () => (
  <svg width="109" height="109" viewBox="0 0 109 109">
    <rect width="109" height="109" fill="#e9e4de" />
    <path d={specks(50, 90, [0, 0, 109, 109], 9)} fill="#c3dfb5" />
    <path d={specks(51, 45, [0, 0, 109, 109], 8)} fill="#dcd8ea" />
    <path d="M50 109L47 80L30 74L44 50L62 28L74 0H82L66 38L60 56L64 70L56 82L60 98L84 100L109 72V109Z" fill="#abcbd1" />
    <path d="M88 20L98 28L109 22V48L99 40Z" fill="#b3d0d6" />
    <path d="M70 54L66 48L78 16L87 8L80 36Z" fill="#f3cfb4" />
    <path d="M0 109L22 94L40 76L50 82L38 109Z" fill="#e2e6d3" />
    <path d={walks(52, 60, [0, 0, 70, 109], 12, 3)} fill="none" stroke="#8f8fd0" strokeWidth="0.7" opacity="0.6" />
    <path d={walks(53, 50, [0, 0, 109, 109], 14, 3)} fill="none" stroke="#e59a90" strokeWidth="0.8" opacity="0.65" />
    <path d={walks(54, 90, [0, 0, 109, 109], 3, 2)} fill="none" stroke="#6b6b6b" strokeWidth="0.7" opacity="0.5" />
    <path d="M63 62L90 72L108 68M90 72L84 92M90 72L70 66M36 60L58 20M20 40L34 4M76 60L100 84" fill="none" stroke="#e08a86" strokeWidth="1" />
    <path d="M84 2L66 46L56 70L50 80L54 108" fill="none" stroke="#8b8fc6" strokeWidth="0.9" />
    <g fill="#d3777c"><rect x="34" y="55" width="9" height="4" /><rect x="85" y="34" width="9" height="4" /><rect x="89" y="69" width="8" height="4" /></g>
  </svg>
);

/* ---------- icons ---------- */
const Layers = ({ w, h = w, outline }) => (
  <svg width={w} height={h} viewBox="0 0 36 33" fill="currentColor" preserveAspectRatio="none">
    <path d="M15 0L34.5 8.500L21 22.500L.5 14Z" />
    <path d="M2 18.500L21 27L33.500 14.500L35.500 17.500L21 32.500L1 23.500Z" stroke={outline ? "currentColor" : "none"} fill={outline ? "none" : "currentColor"} strokeWidth="2" />
  </svg>
);
const Pin = ({ w, h }) => (
  <svg width={w} height={h} viewBox="0 0 22 34" preserveAspectRatio="none">
    <path fillRule="evenodd" fill="currentColor" d="M11 34C9.500 28 0 20 0 11A11 11 0 0 1 22 11C22 20 12.500 28 11 34ZM11 7.500A4.400 4.400 0 1 0 11 16.300A4.400 4.400 0 1 0 11 7.500Z" />
  </svg>
);
const Cross = ({ w, h = w, s = 3 }) => (
  <svg width={w} height={h} viewBox={`0 0 ${w} ${h}`} stroke="currentColor" strokeWidth={s} strokeLinecap="round">
    <path d={`M2 2L${w - 2} ${h - 2}M${w - 2} 2L2 ${h - 2}`} />
  </svg>
);
const Eye = ({ hole }) => (
  <svg width="26" height="18" viewBox="0 0 26 18">
    <path d="M0 9C5 2 9 0 13 0S21 2 26 9C21 16 17 18 13 18S5 16 0 9Z" fill="currentColor" />
    <circle cx="13" cy="8.600" r="5.400" fill={hole} />
    <circle cx="13" cy="8.600" r="3.700" fill="currentColor" />
    <path d="M13 8.600V4.500A4 4 0 0 1 17 8.200Z" fill={hole} />
  </svg>
);
const Funnel = () => (
  <svg width="19" height="22" viewBox="0 0 19 22" fill={steel}><path d="M0 0H19V2H0ZM1 4H18L11.5 12V18L8 22V12Z" /></svg>
);
const Caret = ({ w = 13, h = 7 }) => <svg width={w} height={h} viewBox="0 0 12 7" preserveAspectRatio="none"><path d="M0 0H12L6 7Z" fill="currentColor" /></svg>;
const Chevron = () => <svg width="10" height="18" viewBox="0 0 10 18"><path d="M1.500 1.500L7 9L1.500 16.500" fill="none" stroke="#fff" strokeWidth="2.600" /></svg>;
const ZoomTo = () => (
  <svg width="24" height="24" viewBox="0 0 24 24" fill="none" stroke="#fff" strokeWidth="2.400">
    <path d="M1.200 7V1.200H7M17 1.200H22.800V7M22.800 17V22.800H17M7 22.800H1.200V17" /><circle cx="10.500" cy="9.500" r="4.800" strokeWidth="1.700" /><path d="M13.600 13L18 18.500" />
  </svg>
);
const LayerFilter = () => (
  <svg width="24" height="24" viewBox="0 0 24 24" fill="#fff"><path d="M8 5L16 9.500L17.500 12L10 19L0 13.500ZM1 16L10 21L19 13V16L10 24L2 19.500ZM15 0H24V1.400H15ZM15.500 2.500H23.500L20.300 6.500V9L18.500 10.500V6.500Z" /></svg>
);
const Table = () => (
  <svg width="24" height="24" viewBox="0 0 24 24" fill="none" stroke="#fff" strokeWidth="1.800"><path d="M1 1H23V23H1ZM1 9H23M1 16H23M8.300 9V23M15.700 9V23" /><path d="M1 7.500H23" /></svg>
);
const Trash = () => (
  <svg width="19" height="24" viewBox="0 0 19 24" fill="#fff"><path d="M6 0H13L14.500 3H19V5.500H0V3H4.500ZM6.500 1.500L6 3H13L12.500 1.500ZM1.500 7.500H17.500L16 24H3Z" /><path d="M6 9.500L6.800 21.500M9.500 9.500V21.500M13 9.500L12.200 21.500" stroke={blue} strokeWidth="1.300" /></svg>
);
const Swap = () => (
  <svg width="24" height="22" viewBox="0 0 24 22" fill="none" stroke="#fff" strokeWidth="2.600"><path d="M1 6H3M4.500 6H6.500M8 6H22M16.500 .8L22.300 6L16.500 11M23 16.500H21M19.500 16.500H17.500M16 16.500H2M7.500 11.500L1.700 16.500L7.500 21.500" /></svg>
);
const MapFilter = () => (
  <svg width="23" height="24" viewBox="0 0 23 24" fill="#fff"><path d="M0 5L5.500 3.500V20L0 22ZM6.800 4L11.500 6V23.500L6.800 21ZM13 6.500L15 6V9L17.500 13V10.500L21.500 8V20L13 23.500ZM14 0H22.500V1.300H14ZM14.500 2.300H22L19 6V9L17.500 10V6Z" /></svg>
);
const GlobeSearch = () => (
  <svg width="25" height="25" viewBox="0 0 25 25" fill="none" stroke="#fff" strokeWidth="1.500">
    <circle cx="12" cy="12" r="10.700" /><path d="M12 1C5 6 5 18 12 23M12 1C17 5 18 9 18 12M1.500 12H22.500M3 6.500H21M3 17.500H10M12 1V12" /><circle cx="15" cy="15" r="4.600" fill="#3cc05f" strokeWidth="1.800" /><path d="M18.500 18.500L23.500 24" strokeWidth="2.800" />
  </svg>
);
const Expand = () => (
  <svg width="17" height="17" viewBox="0 0 17 17" fill="#fff"><path d="M9 1H16.500V8L13.500 5.500L10.500 8.500L8.500 6.500L11.500 3.500ZM.5 9L3.500 11.500L6.500 8.500L8.500 10.500L5.500 13.500L8 16H.5Z" /></svg>
);
const Mouse = () => (
  <svg width="14" height="19" viewBox="0 0 14 19" fill="#fff"><path d="M0 8.500V7Q0 0 6.300 0V3Q5 3.500 5.500 6Q6.500 7 8.300 6V3.500L7.700 3V0Q14 0 14 7V8.500ZM0 10H14V13Q14 19 7 19T0 13Z" /></svg>
);
const Logo = () => (
  <svg width="58" height="58" viewBox="0 0 58 58">
    <defs><path id="arc" d="M7 31A22 22 0 0 1 51 31" /></defs>
    <circle cx="29" cy="29" r="29" fill={blue} />
    <text fill="#d7eefa" fontSize="6.800" fontFamily="Lato, sans-serif"><textPath href="#arc" startOffset="3" textLength="62">MyGeoCommunity</textPath></text>
    <g fill="none" stroke="#b9e0f4" strokeWidth="0.700">
      <circle cx="29" cy="31" r="19" strokeWidth="1" /><circle cx="29" cy="31" r="17" />
      <ellipse cx="29" cy="31" rx="17" ry="8" transform="rotate(25 29 31)" /><ellipse cx="29" cy="31" rx="17" ry="7" transform="rotate(85 29 31)" /><ellipse cx="29" cy="31" rx="17" ry="10" transform="rotate(-35 29 31)" />
      <path d="M14 23L29 14L44 25L38 44L20 45ZM29 14L20 45M14 23L38 44M44 25L20 45M12 33H46M18 19L34 48" />
    </g>
  </svg>
);

/* ---------- shell ---------- */
const Page = styled.div`
  width: 2559px; height: 1235px; display: flex; flex-direction: column; color: #000; overflow: hidden;
`;
const Header = styled.header`
  flex: none; height: 142px; background: ${navy}; position: relative; z-index: 3;
  padding: 12px 17px 6px 20px; display: flex; flex-direction: column; justify-content: space-between;
`;
const Brand = styled.div`height: 58px; display: grid; grid-template-columns: 886px 750px 1fr; align-items: center;`;
const SearchBox = styled.div`
  height: 50px; background: #fff; border: 3px solid #ddd; padding: 1px; display: flex; align-items: stretch; gap: 13px; align-self: start; margin-top: 4px;
  box-shadow: 0 3px 8px rgba(0, 0, 0, 0.25);
`;
const SearchButton = styled.button`width: 43px; border: 0; border-radius: 3px; background: ${blue}; color: #fff; display: grid; place-items: center; padding: 0;`;
const Placeholder = styled.span`font-size: 20px; color: #aaa; align-self: center; letter-spacing: ${(p) => p.$ls || 0}px;`;
const Account = styled.div`display: flex; gap: 9px; justify-content: flex-end;`;
const Button = styled.button`
  border: 0; border-radius: 3px; background: ${blue}; color: #fff; padding: 0; display: grid; place-items: center; white-space: nowrap;
  width: ${(p) => p.$w}px; height: ${(p) => p.$h || 45}px; font-size: ${(p) => p.$fs || 18}px; letter-spacing: ${(p) => p.$ls || 0.5}px;
`;
const NavRow = styled.div`display: flex; align-items: center; height: 47px; margin-left: -1px;`;
const Crumb = styled.div`
  width: 312px; height: 47px; background: #285b80; border-radius: 4px; color: #fff; display: flex; align-items: center; padding: 0 11px; font-size: 18px; margin-right: 10px;
  svg { position: relative; top: -2px; }
  svg + svg { top: 0; margin-left: 10px; }
`;
const CrumbName = styled.span`flex: 1; letter-spacing: 0.28px; margin-left: 13px;`;
const NavGroup = styled.div`display: flex; gap: 10px;`;
const Divider = styled.i`width: 2px; height: 29px; background: #fff; margin: 0 9px;`;
const Spacer = styled.i`flex: 1;`;

const Main = styled.main`flex: none; height: 1001px; display: flex; position: relative;`;
const Side = styled.aside`
  width: ${(p) => p.$w}px; background: #fff; flex: none; position: relative; z-index: 1; display: flex; flex-direction: column;
  box-shadow: 0 0 10px rgba(0, 0, 0, 0.4)${(p) => (p.$inset ? ", inset 5px 0 7px -2px rgba(0,0,0,.22)" : "")};
`;
const Band = styled.div`
  height: ${(p) => p.$h}px; flex: none; display: flex; align-items: ${(p) => p.$align || "center"}; padding: ${(p) => p.$pad || 0};
  ${(p) => !p.$plain && css`border-bottom: 1px solid ${line};`}
`;
const LayersTab = styled.button`width: 60px; height: 60px; border: 0; border-radius: 0 0 3px 0; background: ${blue}; color: #fff; display: grid; place-items: center; padding: 6px 0 0; box-shadow: inset 5px 0 7px -3px rgba(0,0,0,.3);`;
const CloseTile = styled.button`width: 37px; height: 45px; border: 0; background: ${blue}; color: #fff; display: grid; place-items: center; padding: 0 0 3px; margin: 2px 10px 0 auto;`;
const FilterInput = styled.div`
  width: 480px; height: 46px; border: 1px solid #d5d5d5; border-radius: 5px 0 0 5px; box-shadow: inset 0 1px 2px rgba(0,0,0,.1);
  display: flex; align-items: center; justify-content: space-between; padding: 0 13px 0 12px;
`;
const Toolbar = styled.div`height: 45px; background: ${blue}; border-radius: 4px; display: flex; align-items: center; color: #fff;`;
const Tool = styled.button`
  width: 43.700px; height: 45px; border: 0; background: none; color: #fff; padding: 0 0 0 2px; display: grid; place-items: center;
  svg { transform: scaleX(${(p) => (p.$flip ? -1 : 1)}); }
`;
const MenuCaret = styled.span`padding: 0 3px 0 6px;`;
const GroupRow = styled.div`
  height: 82px; padding: 0 11px 0 23px; display: flex; align-items: center; font-size: 21px; font-weight: 300; gap: 12px;
  span { letter-spacing: 0.800px; margin-top: 4px; }
`;
const Card = styled.div`
  margin: 11px 12px 0; width: 501px; height: 84px; background: ${steel}; color: #fff; display: flex; align-items: center; padding: 0 18px 0 8px; position: relative; font-size: 20px;
  box-shadow: 0 16px 32px rgba(0,0,0,.45), 0 0 8px rgba(0,0,0,.12);
`;
const CardName = styled.span`flex: 1; margin: 2px 0 0 11px; letter-spacing: 0.600px;`;
const Bars = styled.span`
  display: flex; flex-direction: column; gap: 5px; width: 22px; margin-right: 15px;
  i { height: 2.500px; background: #fff; }
`;
const Slider = styled.i`position: absolute; left: 0; right: 0; bottom: 3px; height: 3px; background: #cfe2f0; border-bottom: 1px solid #8cb3d2;`;
const Percent = styled.span`
  position: absolute; right: -8px; bottom: -6px; width: 54px; height: 24px; background: ${steel}; border-top: 1px solid #fff; border-radius: 3px;
  font-size: 14.500px; font-weight: 500; display: grid; place-items: center;
`;
const Rule = styled.i`height: 1px; background: rgba(120,120,120,.35); margin-top: 15px;`;

const MapPane = styled.section`width: 1211px; height: 1001px; position: relative; flex: none; overflow: hidden;`;
const Thumb = styled.div`position: absolute; left: 6px; bottom: 7px; width: 117px; height: 117px; padding: 4px; background: #fff; box-shadow: 0 10px 24px rgba(0,0,0,.6);`;
const ZoomBar = styled.div`
  position: absolute; right: 6px; bottom: 7px; width: 60px; height: 177px; background: ${blue}; border-radius: 3px; box-shadow: 0 2px 8px rgba(0,0,0,.6);
  display: flex; flex-direction: column; justify-content: space-around;
`;
const ZoomButton = styled.button`height: 59px; border: 0; padding: 0; background: none; display: grid; place-items: center;`;

const LayerMark = styled.span`padding-top: 13px;`;
const PointMark = styled.span`margin: 10px 10px 0 1px;`;
const Gap = styled.i`width: ${(p) => p.$w}px;`;
const Select = styled.div`
  width: 723px; height: 54px; border: 1px solid #d9d9d9; margin: 0 6px 0 7px; display: flex; align-items: center; justify-content: space-between; padding: 0 16px 0 14px;
  font-size: 20px; letter-spacing: 0.770px; white-space: nowrap;
`;
const Coord = styled.div`
  width: ${(p) => p.$w}px; height: 47px; border: 1px solid #d9d9d9; border-radius: 6px 0 0 6px; display: flex; font-family: "DejaVu Sans Mono", monospace;
`;
const CoordName = styled.span`width: 67px; font-size: 18px; display: grid; place-items: center;`;
const CoordValue = styled.span`
  flex: 1; border-left: 1px solid #d0d0d0; border-radius: 6px 0 0 6px; padding: 2px 0 0 13px; color: #2b92ce; font-size: 16px; display: flex; align-items: center; white-space: nowrap;
  box-shadow: inset 0 2px 2px rgba(0,0,0,.08);
  b { font-weight: 400; letter-spacing: 0.120px; }
`;
const Stepper = styled.span`
  width: 18px; height: 41px; margin: 3px 3px 0 0; border: 1px solid #dedede; border-radius: 3px; color: #444; display: flex; flex-direction: column; justify-content: space-between; align-items: center; padding: 7px 0 8px; flex: none;
  svg:first-child { transform: rotate(180deg); }
`;
const Pair = styled.div`display: flex; background: ${blue}; border-radius: 3px; height: 45px;`;
const IconButton = styled.button`
  width: 44px; height: 45px; padding: 0; border: 0; color: #fff; display: grid; place-items: center; background: ${(p) => (p.$active ? "#3cc05f" : "transparent")};
  border-radius: ${(p) => (p.$active ? "0 3px 3px 0" : 0)}; box-shadow: ${(p) => (p.$active ? "0 0 0 5px rgba(58,120,170,.42)" : "none")};
`;
const Results = styled.div`flex: 1; margin-top: 22px; display: flex; min-height: 0; overflow: hidden;`;
const Attributes = styled.dl`margin: 34px 0 0; padding-left: 32px; flex: 1; font-size: 20.300px;`;
const Attribute = styled.div`
  display: grid; grid-template-columns: 389px 1fr; height: 31.500px; line-height: 31.500px; white-space: nowrap;
  dt { font-weight: 600; letter-spacing: 0.700px; }
  dd { margin: 0; font-weight: 300; color: #222; letter-spacing: 0.850px; }
`;
const Scrollbar = styled.div`width: 23px; background: #f1f1f1; display: flex; flex-direction: column; align-items: center; color: #555; padding: 12px 0 10px;`;
const ScrollThumb = styled.i`width: 21px; height: 168px; background: #c1c1c1; align-self: flex-end; margin: 7px 0 auto;`;

const StatusBar = styled.div`
  height: 45px; flex: none; background: #fff; position: relative; z-index: 4; box-shadow: 0 -1px 10px rgba(0,0,0,.4);
  display: flex; align-items: center; padding-left: 15px; font-size: 16px; color: #222;
`;
const Credit = styled.span`flex: 1; padding-bottom: 10px; font-weight: 300; letter-spacing: 0.800px; a { color: ${steel}; font-weight: 400; }`;
const ScaleLabel = styled.span`margin: 5px 7px 0 7px; font-size: 17px; font-weight: 300; width: 53px; letter-spacing: 0.600px;`;
const ScaleSelect = styled.div`
  width: 166px; margin-right: -10px; height: 38px; border: 1px solid ${blue}; background: #f2f0f2; color: ${blue}; border-radius: 2px; display: flex; align-items: center; justify-content: space-between; padding: 0 14px 0 12px; font-size: 17px; letter-spacing: 0.500px;
`;
const Footer = styled.footer`
  height: 47px; flex: none; background: ${navy}; position: relative; z-index: 5; color: #fff; display: flex; align-items: center; padding-left: 1090px; font-size: 16.500px; letter-spacing: 0.300px;
  a { width: 154px; } a + a { width: 157px; }
`;

const ROWS = [
  ["fid", "9598"], ["polysqkm", "5.91883"], ["bookcode", "AT 7"], ["name", "Coega Bontveld"], ["constrgt", "19%"], ["cnsrvtnstt", "Least threatened"],
  ["mapcode", "AT7"], ["booksequ", "07 02 007"], ["biomecode", "AT"], ["biome", "Albany Thicket Biome"], ["groupcode", "AT"], ["group", "Albany Thicket"],
  ["brgncode", "AT"], ["bioregion", "Albany Thicket"], ["vegtypeid", "304"], ["biomeid", "5"], ["groupid", "20"], ["brgnid", "20"],
  ["prtctnstts", "Poorly protected"], ["pdfname", "pdf\\AT_7_Coega_Bontveld.pdf"], ["toclegend", "07 02 007 AT 7 Coega Bontveld"], ["legend", "AT 7 Coega Bontveld"], ["fpatchid", "0"],
];

const Steps = () => <Stepper><Caret w={11} h={6} /><Caret w={11} h={6} /></Stepper>;

export default function App() {
  return (
    <>
      <GlobalStyle />
      <Page>
        <Header>
          <Brand>
            <Logo />
            <SearchBox>
              <SearchButton><FaSearch size={19} /></SearchButton>
              <Placeholder $ls={0.75}>Search</Placeholder>
            </SearchBox>
            <Account>
              <Button $w={114} $h={44} $fs={20} $ls={0.9}>Register</Button>
              <Button $w={99} $h={44} $fs={20} $ls={1.1}>Sign in</Button>
            </Account>
          </Brand>
          <NavRow>
            <Crumb>
              <FaHome size={26} />
              <Chevron />
              <CrumbName>South Africa: NBA ...</CrumbName>
              <FaInfoCircle size={23} />
            </Crumb>
            <NavGroup>
              <Button $w={76}>View</Button>
              <Button $w={85}>Share</Button>
            </NavGroup>
            <Divider />
            <NavGroup>
              <Button $w={77}>Print</Button>
              <Button $w={110}>Measure</Button>
            </NavGroup>
            <Spacer />
            <Button $w={48}><Expand /></Button>
          </NavRow>
        </Header>

        <Main>
          <Side $w={525} $inset>
            <Band $h={61}>
              <LayersTab><Layers w={36} h={33} /></LayersTab>
              <CloseTile><Cross w={36} h={36} s={3} /></CloseTile>
            </Band>
            <Band $h={78} $align="flex-start" $pad="8px 0 0 23px">
              <FilterInput><Placeholder $ls={0.85}>Filter layers</Placeholder><Funnel /></FilterInput>
            </Band>
            <Band $h={78} $align="flex-start" $pad="8px 0 0 121px">
              <Toolbar>
                <Tool><ZoomTo /></Tool><Tool><LayerFilter /></Tool><Tool><Table /></Tool><Tool><Trash /></Tool>
                <Tool $flip><FaWrench size={23} /></Tool><Tool><Swap /></Tool>
                <MenuCaret><Caret w={12} h={6} /></MenuCaret>
              </Toolbar>
            </Band>
            <GroupRow><Eye hole="#fff" /><span>Default</span><Spacer /><FaFolderOpen size={26} /></GroupRow>
            <Card>
              <Bars><i /><i /><i /></Bars>
              <Eye hole={steel} />
              <CardName>South Africa: NBA ...</CardName>
              <svg width="17" height="20" viewBox="0 0 17 20"><path d="M14 2.500L4.500 10L14 17.500" fill="none" stroke="#fff" strokeWidth="5" strokeLinecap="round" /></svg>
              <Slider />
              <Percent>100 %</Percent>
            </Card>
            <Rule />
          </Side>

          <MapPane>
            <BioMap />
            <Thumb><CityThumb /></Thumb>
            <ZoomBar>
              <ZoomButton><svg width="34" height="34" viewBox="0 0 34 34" stroke="#fff" strokeWidth="5.500" strokeLinecap="round"><path d="M3 17H31M17 3V31" /></svg></ZoomButton>
              <ZoomButton><svg width="34" height="34" viewBox="0 0 34 34" stroke="#fff" strokeWidth="5.500" strokeLinecap="round"><path d="M3 16H31" /></svg></ZoomButton>
              <ZoomButton><svg width="34" height="34" viewBox="0 0 34 34" fill="#fff"><circle cx="4.500" cy="17" r="4.300" /><circle cx="17" cy="17" r="4.300" /><circle cx="29.500" cy="17" r="4.300" /></svg></ZoomButton>
            </ZoomBar>
          </MapPane>

          <Side $w={823}>
            <Band $h={64} $plain $pad="2px 12px 0 19px"><Pin w={21} h={34} /><Spacer /><Cross w={34} h={34} s={2.6} /></Band>
            <Band $h={75} $pad="0 0 5px 12px">
              <LayerMark><Layers w={20} h={18} outline /></LayerMark>
              <Select><span>South Africa: NBA 2011 Terrestrial Ecosystem Threat Status (Area)</span><Caret w={14} h={8} /></Select>
              <Button $w={45}><MapFilter /></Button>
            </Band>
            <Band $h={85} $pad="0 10px 0 14px">
              <PointMark><Pin w={14} h={21} /></PointMark>
              <Coord $w={283}><CoordName>Lat</CoordName><CoordValue><b>-33.53185601533659</b></CoordValue><Steps /></Coord>
              <Gap $w={12} />
              <Coord $w={284}><CoordName>Lon</CoordName><CoordValue><b>25.484620034694675</b></CoordValue><Steps /></Coord>
              <Spacer />
              <Pair><IconButton><FaCog size={23} /></IconButton><IconButton><FaCheck size={24} /></IconButton></Pair>
              <Gap $w={6} />
              <Pair><IconButton><FaInfoCircle size={22} /></IconButton><IconButton $active><GlobeSearch /></IconButton></Pair>
            </Band>
            <Results>
              <Attributes>
                {ROWS.map(([k, v]) => <Attribute key={k}><dt>{k}:</dt><dd>{v}</dd></Attribute>)}
              </Attributes>
              <Scrollbar>
                <svg width="11" height="6" viewBox="0 0 11 6"><path d="M0 6H11L5.500 0Z" fill="#a3a3a3" /></svg>
                <ScrollThumb />
                <Caret w={11} h={6} />
              </Scrollbar>
            </Results>
          </Side>
        </Main>

        <StatusBar>
          <Credit>© <a>OpenStreetMap</a> contributors.</Credit>
          <Button $w={38} $h={38}><Mouse /></Button>
          <ScaleLabel>Scale:</ScaleLabel>
          <ScaleSelect>1 : 9244667<svg width="14" height="9" viewBox="0 0 14 9"><path d="M1 1L7 7.500L13 1" fill="none" stroke={blue} strokeWidth="2" /></svg></ScaleSelect>
        </StatusBar>
        <Footer><a>geonode.org</a><a>Developers</a><a>About</a></Footer>
      </Page>
    </>
  );
}
